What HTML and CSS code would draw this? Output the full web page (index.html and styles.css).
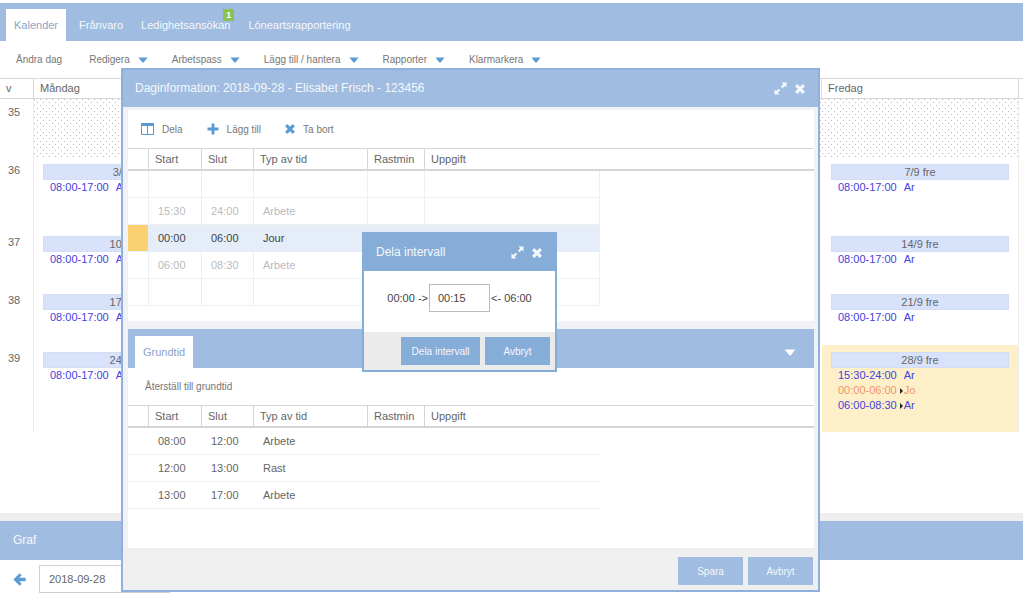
FILE: index.html
```
<!DOCTYPE html>
<html lang="sv">
<head>
<meta charset="utf-8">
<title>Kalender</title>
<link rel="stylesheet" href="styles.css">
</head>
<body>
<svg class="sprite" aria-hidden="true">
  <symbol id="expand" viewBox="0 0 13 13"><path d="M7.500 .5H12.500V5.500L10.800 3.900L8.300 6.200L6.900 4.800L9.200 2.300ZM5.500 12.500H.5V7.500L2.200 9.100L4.700 6.800L6.100 8.200L3.800 10.700Z"/></symbol>
  <symbol id="cross" viewBox="0 0 10 10"><path d="M2.300 .1L5 2.800L7.700 .1L9.900 2.300L7.200 5L9.900 7.700L7.700 9.900L5 7.200L2.300 9.900L.1 7.700L2.800 5L.1 2.300Z"/></symbol>
  <symbol id="caret" viewBox="0 0 10 6"><path d="M.4 .4H9.600L5.800 5.200Q5 6 4.200 5.200Z"/></symbol>
</svg>
<div class="app">
  <nav class="tabs">
    <a class="tab active" href="#kalender">Kalender</a>
    <a class="tab" href="#franvaro">Frånvaro</a>
    <a class="tab" href="#ledighet">Ledighetsansökan<span class="badge">1</span></a>
    <a class="tab" href="#loneart">Löneartsrapportering</a>
  </nav>
  <div class="menubar">
    <button class="menu plain">Ändra dag</button>
    <button class="menu">Redigera<svg class="caret"><use href="#caret"/></svg></button>
    <button class="menu">Arbetspass<svg class="caret"><use href="#caret"/></svg></button>
    <button class="menu">Lägg till / hantera<svg class="caret"><use href="#caret"/></svg></button>
    <button class="menu">Rapporter<svg class="caret"><use href="#caret"/></svg></button>
    <button class="menu">Klarmarkera<svg class="caret"><use href="#caret"/></svg></button>
  </div>
  <main class="calendar-area">
    <table class="calendar">
      <colgroup><col class="c-week"><col><col><col><col><col><col class="c-edge"></colgroup>
      <thead><tr><th>v</th><th>Måndag</th><th></th><th></th><th></th><th>Fredag</th><th></th></tr></thead>
      <tbody>
        <tr class="off"><th>35</th><td></td><td></td><td></td><td></td><td></td><td></td></tr>
        <tr class="tall"><th>36</th>
          <td><div class="date">3/9 mån</div><div class="shift"><span>08:00-17:00</span><span>Ar</span></div></td><td></td><td></td><td></td>
          <td><div class="date">7/9 fre</div><div class="shift"><span>08:00-17:00</span><span>Ar</span></div></td><td></td></tr>
        <tr><th>37</th>
          <td><div class="date">10/9 mån</div><div class="shift"><span>08:00-17:00</span><span>Ar</span></div></td><td></td><td></td><td></td>
          <td><div class="date">14/9 fre</div><div class="shift"><span>08:00-17:00</span><span>Ar</span></div></td><td></td></tr>
        <tr><th>38</th>
          <td><div class="date">17/9 mån</div><div class="shift"><span>08:00-17:00</span><span>Ar</span></div></td><td></td><td></td><td></td>
          <td><div class="date">21/9 fre</div><div class="shift"><span>08:00-17:00</span><span>Ar</span></div></td><td></td></tr>
        <tr class="last"><th>39</th>
          <td><div class="date">24/9 mån</div><div class="shift"><span>08:00-17:00</span><span>Ar</span></div></td><td></td><td></td><td></td>
          <td class="selected"><div class="date">28/9 fre</div>
            <div class="shift"><span>15:30-24:00</span><span>Ar</span></div>
            <div class="shift marked oncall"><span>00:00-06:00</span><span>Jo</span></div>
            <div class="shift marked"><span>06:00-08:30</span><span>Ar</span></div></td><td></td></tr>
      </tbody>
    </table>
  </main>
  <section class="graph">
    <h2 class="graph-title">Graf</h2>
    <div class="graph-bar">
      <button class="back" aria-label="Föregående"><svg viewBox="0 0 12 12"><path d="M6.200 .2L8 2L5.800 4.400H11.700V7.600H5.800L8 10L6.200 11.800L.3 6Z"/></svg></button>
      <input class="date-input" type="text" value="2018-09-28" aria-label="Datum">
    </div>
  </section>
</div>

<section class="window day-window" role="dialog" aria-labelledby="day-title">
  <header class="window-head">
    <h1 id="day-title">Daginformation: 2018-09-28 - Elisabet Frisch - 123456</h1>
    <button class="tool" aria-label="Maximera"><svg class="i-expand"><use href="#expand"/></svg></button>
    <button class="tool" aria-label="Stäng"><svg class="i-cross"><use href="#cross"/></svg></button>
  </header>
  <div class="day-body">
    <div class="panel top-panel">
      <div class="toolbar">
        <button class="action"><svg class="i-split" viewBox="0 0 13 12"><path fill-rule="evenodd" d="M0 0H13V12H0ZM1 3V11H6V3ZM7 3V11H12V3Z"/></svg>Dela</button>
        <button class="action"><svg class="i-plus" viewBox="0 0 12 12"><path d="M4.600 .5H7.400V4.600H11.500V7.400H7.400V11.500H4.600V7.400H.5V4.600H4.600Z"/></svg>Lägg till</button>
        <button class="action"><svg class="i-cross"><use href="#cross"/></svg>Ta bort</button>
      </div>
      <table class="times ruled">
        <colgroup><col class="c-mark"><col class="c-start"><col class="c-end"><col class="c-type"><col class="c-break"><col class="c-task"><col></colgroup>
        <thead><tr><th></th><th>Start</th><th>Slut</th><th>Typ av tid</th><th>Rastmin</th><th>Uppgift</th><th></th></tr></thead>
        <tbody>
          <tr><td></td><td></td><td></td><td></td><td></td><td></td><td></td></tr>
          <tr class="dim"><td></td><td>15:30</td><td>24:00</td><td>Arbete</td><td></td><td></td><td></td></tr>
          <tr class="current"><td></td><td>00:00</td><td>06:00</td><td>Jour</td><td></td><td></td><td></td></tr>
          <tr class="dim"><td></td><td>06:00</td><td>08:30</td><td>Arbete</td><td></td><td></td><td></td></tr>
          <tr><td></td><td></td><td></td><td></td><td></td><td></td><td></td></tr>
        </tbody>
      </table>
    </div>
    <div class="panel base-panel">
      <div class="base-head"><a class="tab active" href="#grundtid">Grundtid</a><button class="tool" aria-label="Fäll ihop"><svg class="caret"><use href="#caret"/></svg></button></div>
      <div class="toolbar"><button class="action">Återställ till grundtid</button></div>
      <table class="times">
        <colgroup><col class="c-mark"><col class="c-start"><col class="c-end"><col class="c-type"><col class="c-break"><col class="c-task"><col></colgroup>
        <thead><tr><th></th><th>Start</th><th>Slut</th><th>Typ av tid</th><th>Rastmin</th><th>Uppgift</th><th></th></tr></thead>
        <tbody>
          <tr><td></td><td>08:00</td><td>12:00</td><td>Arbete</td><td></td><td></td><td></td></tr>
          <tr><td></td><td>12:00</td><td>13:00</td><td>Rast</td><td></td><td></td><td></td></tr>
          <tr><td></td><td>13:00</td><td>17:00</td><td>Arbete</td><td></td><td></td><td></td></tr>
        </tbody>
      </table>
    </div>
  </div>
  <footer class="window-foot"><button class="btn">Spara</button><button class="btn">Avbryt</button></footer>
</section>

<section class="window split-window" role="dialog" aria-labelledby="split-title">
  <header class="window-head">
    <h2 id="split-title">Dela intervall</h2>
    <button class="tool" aria-label="Maximera"><svg class="i-expand"><use href="#expand"/></svg></button>
    <button class="tool" aria-label="Stäng"><svg class="i-cross"><use href="#cross"/></svg></button>
  </header>
  <div class="split-body">
    <label for="split-time">00:00 -&gt;</label><input id="split-time" type="text" value="00:15"><span>&lt;- 06:00</span>
  </div>
  <footer class="window-foot"><button class="btn wide">Dela intervall</button><button class="btn">Avbryt</button></footer>
</section>
</body>
</html>
```
FILE: styles.css
```
* { box-sizing: border-box; }

body {
  margin: 0;
  position: relative;
  min-height: 100vh;
  overflow: hidden;
  background: #fff;
  color: #666;
  font: 11px/15px "Liberation Sans", Arial, sans-serif;
}

button, input { font: inherit; color: inherit; }
button { border: 0; padding: 0; background: none; }
a { color: inherit; text-decoration: none; }
h1, h2 { margin: 0; font-size: 12px; font-weight: normal; }
table { border-collapse: separate; border-spacing: 0; table-layout: fixed; width: 100%; }
th { font-weight: normal; text-align: left; }
svg { display: block; fill: currentColor; }
.sprite { position: absolute; width: 0; height: 0; }

.app { display: flex; flex-direction: column; min-height: 100vh; }

/* Main tabs */
.tabs {
  display: flex;
  margin-top: 3px;
  padding: 6px 6px 0;
  background: #a0bce0;
}
.tab { position: relative; height: 32px; padding: 0 9px; line-height: 32px; color: #f4f8fd; }
.tab.active { padding: 0 8px; background: #fff; color: #8ba3c7; }
.tabs .tab.active { margin-right: 4px; }
.badge {
  position: absolute;
  top: 0;
  right: 5px;
  width: 11px;
  height: 12px;
  background: #8cc152;
  color: #fff;
  font-size: 9px;
  font-weight: bold;
  line-height: 12px;
  text-align: center;
}

/* Menu row */
.menubar { display: flex; gap: 24px; height: 37px; padding: 0 16px; font-size: 10px; color: #777; }
.menu { display: flex; align-items: center; gap: 8px; }
.menu.plain { padding-right: 3px; }
.caret { width: 10px; height: 6px; color: #5b9bd5; }

/* Calendar */
.calendar-area { flex: 1; border-bottom: 8px solid #eee; }
.c-week { width: 34px; }
.c-edge { width: 4px; }
.calendar thead th {
  height: 21px;
  padding: 0 6px;
  border: solid #d8d8d8;
  border-width: 1px 1px 1px 0;
}
.calendar thead th:last-child { padding: 0; border-right: 0; }
.calendar tbody th { padding: 6px 8px; vertical-align: top; border-right: 1px solid #eee; }
.calendar td { padding: 7px 9px; vertical-align: top; }
.calendar td:nth-child(6) { border-right: 1px solid #eee; }
.calendar td:last-child { padding: 0; }
.calendar tbody tr { height: 58px; }
.calendar tbody tr.tall { height: 72px; }
.calendar tbody tr.last { height: 87px; }
.off td:not(:last-child) {
  background-image:
    conic-gradient(from 270deg at 1px 1px, #b8b8b8 90deg, transparent 0),
    conic-gradient(from 270deg at 1px 1px, #b8b8b8 90deg, transparent 0);
  background-size: 6px 6px;
  background-position: 0 0, 3px 3px;
}
.date { height: 16px; border: 1px solid #d3def5; background: #d8e3fb; text-align: center; line-height: 14px; }
.shift { display: flex; gap: 7px; padding-left: 7px; color: #4540e0; }
.shift.oncall { color: #f0946c; }
.shift.marked { gap: 0; }
.shift.marked span:last-child::before {
  content: "";
  display: inline-block;
  margin: 0 1px 0 3px;
  border: solid transparent;
  border-width: 3px 0 3px 3px;
  border-left-color: #222;
  vertical-align: middle;
}
.selected { background: #fdf0c8; }

/* Graph panel */
.graph-title { height: 39px; padding: 0 13px; background: #a0bce0; color: #f4f8fd; line-height: 39px; }
.graph-bar { display: flex; align-items: center; gap: 13px; height: 36px; padding: 2px 13px 0; }
.back svg { width: 13px; height: 13px; color: #5b9bd5; }
.date-input { width: 131px; height: 28px; padding: 0 9px; border: 1px solid #d0d0d0; }

/* Windows */
.window { position: absolute; display: flex; flex-direction: column; border: 2px solid #8fb0dc; }
.day-window { top: 68px; left: 121px; right: 203px; background: #f0f2f5; }
.window-head { display: flex; align-items: center; gap: 8px; height: 37px; padding: 0 13px 0 12px; background: #a0bce0; color: #f4f8fd; }
.window-head h1, .window-head h2 { flex: 1; }
.i-expand { width: 13px; height: 13px; }
.i-cross { width: 10px; height: 10px; }
.day-body { display: flex; flex-direction: column; gap: 8px; padding: 3px 4px 0 5px; }
.panel { background: #fff; }
.top-panel { padding-bottom: 15px; }
.base-panel { padding-bottom: 39px; }
.toolbar { display: flex; gap: 24px; height: 38px; padding: 0 13px; font-size: 10px; color: #777; }
.base-panel .toolbar { height: 37px; padding: 0 17px; }
.action { display: flex; align-items: center; gap: 8px; }
.action svg { color: #5b9bd5; }
.i-split { width: 13px; height: 12px; }
.i-plus { width: 12px; height: 12px; }

.c-mark { width: 21px; }
.c-start { width: 53px; }
.c-end { width: 52px; }
.c-type { width: 114px; }
.c-break { width: 57px; }
.c-task { width: 175px; }
.times thead th { height: 23px; padding: 0 6px; border: solid #d5d5d5; border-width: 1px 1px 2px 0; }
.times thead th:nth-child(n+6) { border-right: 0; }
.times td { height: 27px; padding: 0 9px; border-bottom: 1px solid #f0f0f0; }
.ruled td { border-right: 1px solid #eee; }
.times td:last-child { border: 0; }
.dim { color: #bbb; }
.current { color: #444; }
.current td:not(:last-child) { background: #e5edf8; border-color: #e5edf8; }
.current td:first-child:first-child { background: #fad070; }

.base-head { display: flex; align-items: center; height: 39px; padding: 7px 18px 0 7px; background: #a0bce0; }
.base-head .tool { margin-left: auto; }
.base-head .caret { width: 12px; height: 7px; color: #fff; }

.window-foot { display: flex; justify-content: flex-end; gap: 5px; padding: 9px 5px 5px; background: #efefef; }
.btn { min-width: 65px; height: 28px; background: #a0bce0; color: #f4f8fd; font-size: 10px; }

.split-window { top: 232px; left: 362px; width: 195px; background: #fff; border-color: #86acd8; }
.split-window .window-head { background: #86acd8; }
.split-window .window-foot { background: #ebebeb; padding: 5px; }
.split-window .btn { background: #86acd8; }
.btn.wide { min-width: 79px; }
.split-body { display: flex; align-items: center; justify-content: center; gap: 1px; height: 61px; padding-bottom: 7px; color: #444; white-space: nowrap; }
.split-body input { width: 61px; height: 28px; padding: 0 8px; border: 1px solid #bbb; }
```
